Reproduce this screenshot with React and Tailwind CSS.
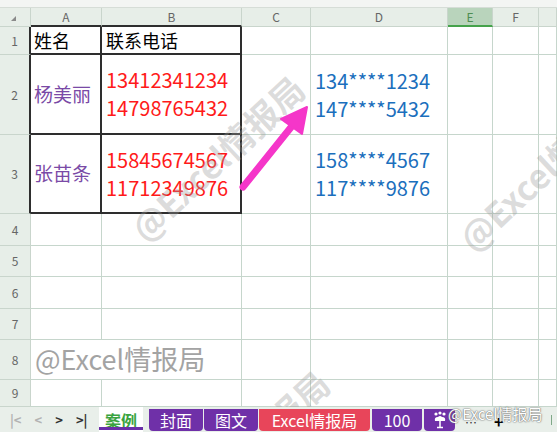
import React from 'react'

const FONT = { fontFamily: '"Noto Sans CJK SC", "Noto Sans", sans-serif' }
const COLS = ['A', 'B', 'C', 'D', 'E', 'F', '']
const ROWS = [1, 2, 3, 4, 5, 6, 7, 8, 9]

const red = ['13412341234', '14798765432', '15845674567', '11712349876']
const blue = ['134****1234', '147****5432', '158****4567', '117****9876']

function Lines({ items, color }) {
  return (
    <div className={'flex flex-col justify-center h-full pl-1 text-[20px] leading-[28px] ' + color}>
      {items.map(t => <span key={t}>{t}</span>)}
    </div>
  )
}

function Cell({ r, c }) {
  const inTable = r <= 3 && c <= 1
  const base = inTable
    ? 'border-r-2 border-b-2 border-[#2e2e2e] bg-white overflow-visible'
    : 'border-r border-b border-[#c6d6cc] bg-white'
  let content = null
  if (r === 1 && c === 0) content = <div className="flex items-center h-full pl-[3px] text-[18px] text-black">姓名</div>
  if (r === 1 && c === 1) content = <div className="flex items-center h-full pl-1 text-[18px] text-black">联系电话</div>
  if (r === 2 && c === 0) content = <div className="flex items-center h-full pl-[3px] text-[19px] text-[#7a4aa6]">杨美丽</div>
  if (r === 3 && c === 0) content = <div className="flex items-center h-full pl-[3px] text-[19px] text-[#7a4aa6]">张苗条</div>
  if (r === 2 && c === 1) content = <Lines items={red.slice(0, 2)} color="text-[#ff1a1a]" />
  if (r === 3 && c === 1) content = <Lines items={red.slice(2)} color="text-[#ff1a1a]" />
  if (r === 2 && c === 3) content = <Lines items={blue.slice(0, 2)} color="text-[#1b6fbd]" />
  if (r === 3 && c === 3) content = <Lines items={blue.slice(2)} color="text-[#1b6fbd]" />
  return <div className={base}>{content}</div>
}

function Watermark({ className }) {
  return (
    <span className={'absolute origin-bottom-left -rotate-[43deg] whitespace-nowrap text-[34px] leading-[40px] font-bold text-[#9a9a9a]/35 pointer-events-none ' + className}>
      @Excel情报局
    </span>
  )
}

function Tab({ label, className }) {
  return (
    <div className={'h-[22px] mt-[2px] flex items-center justify-center rounded-b-[4px] text-[16px] leading-none text-white ' + className}>
      {label}
    </div>
  )
}

export default function App() {
  return (
    <div className="relative w-[557px] h-[432px] overflow-hidden bg-white select-none" style={FONT}>
      <div className="h-[8px] bg-[#f3f5f3] border-b border-[#d6ddd7]" />

      <div className="relative overflow-hidden">
        <div className="grid grid-cols-[31px_71px_140px_69px_137px_45px_46px_1fr] grid-rows-[19px_28px_80px_79px_32px_31px_32px_31px_40px_27px]">
          {/* corner */}
          <div className="relative bg-[#e7eee8] border-r border-b border-[#c9d5cc]">
            <div className="absolute left-[11px] top-[8px] w-0 h-0 border-l-[5px] border-l-transparent border-b-[5px] border-b-[#8a8a8a]" />
          </div>
          {COLS.map((l, i) => (
            <div key={'h' + i}
              className={
                i === 4
                  ? 'flex items-center justify-center text-[12px] text-[#4f8d52] bg-[#b9d4bc] border-r border-[#c9d5cc] border-b-2 border-b-[#45a24b]'
                  : i <= 1
                    ? 'flex items-center justify-center text-[12px] text-[#666] bg-[#e7eee8] border-r border-[#c9d5cc] border-b-2 border-b-[#2e2e2e]'
                    : 'flex items-center justify-center text-[12px] text-[#666] bg-[#e7eee8] border-r border-b border-[#c9d5cc]'
              }>
              {l}
            </div>
          ))}
          {ROWS.map(r => (
            <React.Fragment key={r}>
              <div className={
                r <= 3
                  ? 'flex items-center justify-center text-[12px] text-[#666] bg-[#e7eee8] border-b border-[#c9d5cc] border-r-2 border-r-[#2e2e2e]'
                  : 'flex items-center justify-center text-[12px] text-[#666] bg-[#e7eee8] border-r border-b border-[#c9d5cc]'
              }>
                {r}
              </div>
              {r === 8 ? (
                <>
                  <div className="col-span-2 border-r border-b border-[#c6d6cc] bg-white flex items-center pl-1 text-[27px] text-[#a3a3a3] whitespace-nowrap">
                    @Excel情报局
                  </div>
                  {[2, 3, 4, 5, 6].map(c => <Cell key={c} r={r} c={c} />)}
                </>
              ) : (
                [0, 1, 2, 3, 4, 5, 6].map(c => <Cell key={c} r={r} c={c} />)
              )}
            </React.Fragment>
          ))}
        </div>

        <Watermark className="left-[150px] top-[200px]" />
        <Watermark className="left-[478px] top-[210px]" />
        <Watermark className="left-[175px] top-[495px]" />

        <svg className="absolute inset-0 pointer-events-none" width="557" height="407" viewBox="0 8 557 407">
          <line x1="243" y1="187" x2="292" y2="126" stroke="#f536c9" strokeWidth="7" strokeLinecap="round" />
          <polygon points="307,107 281,119 302,134" fill="#f536c9" stroke="#f536c9" strokeWidth="2" strokeLinejoin="round" />
        </svg>
      </div>

      {/* sheet tabs */}
      <div className="relative h-[25px] bg-[#e9efea] flex items-start">
        <div className="flex items-center h-[25px] w-[99px] pl-[10px] gap-[13px] text-[13px] leading-none">
          <span className="text-[#b3b3b3] font-bold">|&lt;</span>
          <span className="text-[#b3b3b3] font-bold">&lt;</span>
          <span className="text-[#333] font-bold">&gt;</span>
          <span className="text-[#333] font-bold">&gt;|</span>
        </div>
        <div className="relative w-[44px] h-[25px] bg-white flex items-center justify-center text-[16px] leading-none font-bold text-[#3aa33f]">
          案例
          <div className="absolute left-0 right-0 bottom-[2px] h-[3px] bg-[#6a2fa8]" />
        </div>
        <div className="w-[6px]" />
        <Tab label="封面" className="w-[54px] bg-[#6f30a8]" />
        <div className="w-[1px]" />
        <Tab label="图文" className="w-[54px] bg-[#6f30a8]" />
        <div className="w-[1px]" />
        <Tab label="Excel情报局" className="w-[111px] bg-[#e8455a]" />
        <div className="w-[2px]" />
        <Tab label="100" className="w-[50px] bg-[#6f30a8]" />
        <div className="w-[2px]" />
        <div className="w-[31px] h-[22px] mt-[2px] rounded-b-[4px] bg-[#6f30a8] flex items-center justify-center">
          <svg width="14" height="18" viewBox="0 0 14 18">
            <circle cx="3" cy="3" r="1.6" fill="#fff" />
            <circle cx="7" cy="2" r="1.6" fill="#fff" />
            <circle cx="11" cy="3" r="1.6" fill="#fff" />
            <path d="M2 10 Q1 6 5 6 Q7 4 9 6 Q13 6 12 10 Z" fill="#fff" />
            <path d="M7 10 V16 M4 16.5 H10" stroke="#fff" strokeWidth="1.5" />
          </svg>
        </div>
        <span className="ml-[10px] mt-[10px] text-[12px] leading-none text-[#333] tracking-[1px]">…</span>
        <span className="ml-[16px] mt-[6px] text-[16px] leading-none font-bold text-black">+</span>
        <span className="absolute right-[5px] top-[8px] w-[1px] h-[10px] bg-[#7fa888]" />
        <span className="absolute left-[448px] top-[-2px] text-[15px] leading-[18px] text-white whitespace-nowrap [text-shadow:0_0_1px_#555,0_0_2px_#777]">
          @Excel情报局
        </span>
      </div>
    </div>
  )
}
